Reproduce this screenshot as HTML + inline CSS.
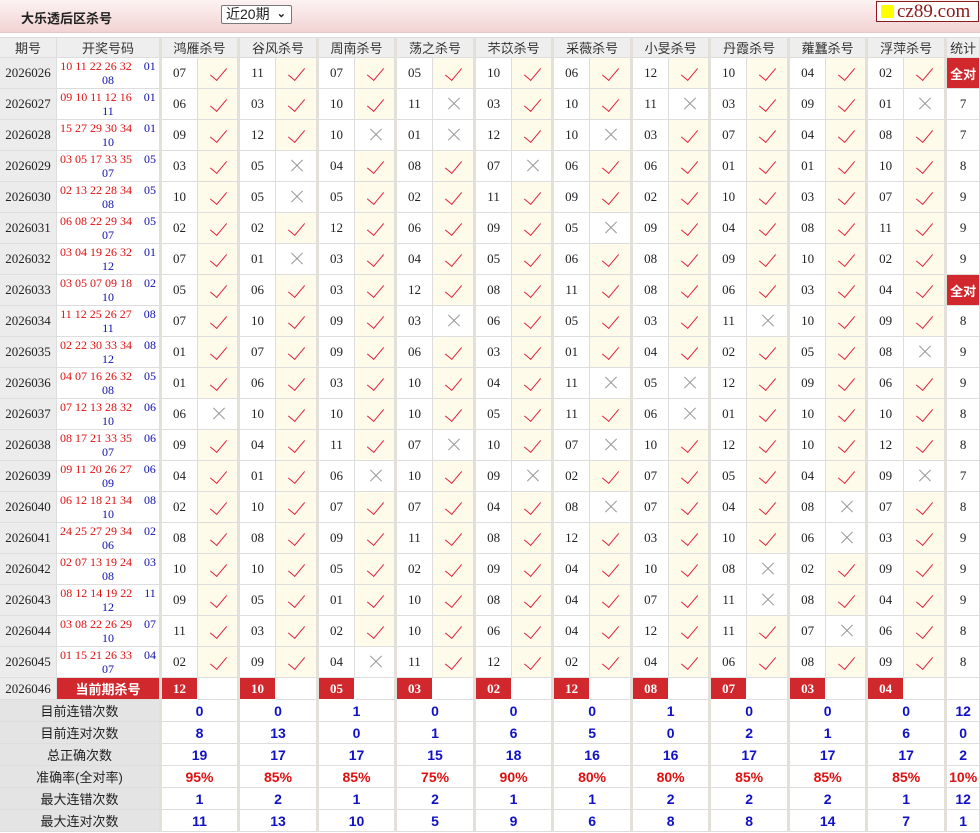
<!DOCTYPE html>
<html><head><meta charset="utf-8"><style>
*{margin:0;padding:0;box-sizing:border-box}
body{width:980px;height:833px;background:#fff;position:relative;overflow:hidden;font-family:"Liberation Serif","Noto Serif CJK SC",serif;font-size:12px;color:#222}
.top{position:absolute;left:0;top:0;width:980px;height:33px;background:linear-gradient(#fdf3f3,#f2d3d3);border-bottom:1px solid #e6c8c8}
.tt{position:absolute;left:21px;top:8px;font:bold 13px "Liberation Sans","Noto Sans CJK SC",sans-serif;color:#222}
.sel{position:absolute;left:221px;top:5px;width:71px;height:19px;border:1px solid #777;border-radius:2px;background:#fff;font:14px "Liberation Sans","Noto Sans CJK SC",sans-serif;padding-left:4px;line-height:17px}
.sel b{position:absolute;right:5px;top:0;font-size:11px}
.logo{position:absolute;left:876px;top:1px;width:103px;height:21px;border:1px solid #8b1a1a;background:#fff;font:19px "Liberation Serif",serif;color:#8b1a1a;line-height:19px;padding-left:20px}
.logo i{position:absolute;left:4px;top:3px;width:13px;height:13px;background:#ff0}
table{position:absolute;left:0;top:37px;width:980px;border-collapse:separate;border-spacing:0;table-layout:fixed}
td,th{border-right:1px solid #ddd;border-bottom:1px solid #ddd;text-align:center;overflow:hidden;font-weight:normal;position:relative}
th{background:#eee;font:13px "Liberation Sans","Noto Sans CJK SC",sans-serif;color:#333;border-top:1px solid #ddd}
th.gp,td.g,td.st{border-right:3px solid #e3e0d9}
tr.h{height:21px}tr.r{height:31px}tr.c{height:22px}tr.t{height:22px}
td.q{background:#ececec;font-size:13px}
td.d{line-height:14px;font-size:12px;border-right:3px solid #e3e0d9}
.rd{color:#e01010}.bl{color:#1010b0}
td.n{font-size:13px}
td.y{background:#fffbea}
td.y::after{content:"";position:absolute;left:16px;top:6px;width:8px;height:15px;border:solid #e2203c;border-width:0 1.7px 1.7px 0;transform:rotate(40deg)}
td.x::before,td.x::after{content:"";position:absolute;left:13px;top:14px;width:16px;height:1px;background:#999;transform:rotate(45deg)}
td.x::after{transform:rotate(-45deg)}
td.s{font-size:13px}
td.a{background:#d0282c;color:#fff;font:bold 13px "Liberation Sans","Noto Sans CJK SC",sans-serif}
td.k{background:#d0282c;color:#fff;font-weight:bold;font-size:13px;border-color:#fff}
td.kk{background:#d0282c;color:#fff;font:bold 13px "Liberation Sans","Noto Sans CJK SC",sans-serif;border-right:3px solid #e3e0d9}
td.l{background:#e4e4e4;font:13px "Liberation Sans","Noto Sans CJK SC",sans-serif;color:#222;border-right:3px solid #e3e0d9}
td.v{font:bold 14px "Liberation Sans",sans-serif;color:#1010c8}
td.p{font:bold 14px "Liberation Sans",sans-serif;color:#e01010}
</style></head><body>
<div class="top"><div class="tt">大乐透后区杀号</div><div class="sel">近20期<b>&#8964;</b></div><div class="logo"><i></i>cz89.com</div></div>
<table>
<colgroup><col style="width:57px"><col style="width:105px"><col style="width:36px"><col style="width:42px"><col style="width:36px"><col style="width:43px"><col style="width:36px"><col style="width:42px"><col style="width:36px"><col style="width:43px"><col style="width:36px"><col style="width:42px"><col style="width:36px"><col style="width:43px"><col style="width:36px"><col style="width:42px"><col style="width:36px"><col style="width:43px"><col style="width:36px"><col style="width:42px"><col style="width:36px"><col style="width:43px"><col style="width:33px"></colgroup>
<tr class="h"><th>期号</th><th class="gp">开奖号码</th><th colspan="2" class="gp">鸿雁杀号</th><th colspan="2" class="gp">谷风杀号</th><th colspan="2" class="gp">周南杀号</th><th colspan="2" class="gp">荡之杀号</th><th colspan="2" class="gp">芣苡杀号</th><th colspan="2" class="gp">采薇杀号</th><th colspan="2" class="gp">小旻杀号</th><th colspan="2" class="gp">丹霞杀号</th><th colspan="2" class="gp">蕹蠶杀号</th><th colspan="2" class="gp">浮萍杀号</th><th>统计</th></tr>
<tr class="r"><td class="q">2026026</td><td class="d"><span class="rd">10 11 22 26 32</span>&nbsp;&nbsp;&nbsp; <span class="bl">01<br>08</span></td><td class="n">07</td><td class="g y"></td><td class="n">11</td><td class="g y"></td><td class="n">07</td><td class="g y"></td><td class="n">05</td><td class="g y"></td><td class="n">10</td><td class="g y"></td><td class="n">06</td><td class="g y"></td><td class="n">12</td><td class="g y"></td><td class="n">10</td><td class="g y"></td><td class="n">04</td><td class="g y"></td><td class="n">02</td><td class="g y"></td><td class="a">全对</td></tr>
<tr class="r"><td class="q">2026027</td><td class="d"><span class="rd">09 10 11 12 16</span>&nbsp;&nbsp;&nbsp; <span class="bl">01<br>11</span></td><td class="n">06</td><td class="g y"></td><td class="n">03</td><td class="g y"></td><td class="n">10</td><td class="g y"></td><td class="n">11</td><td class="g x"></td><td class="n">03</td><td class="g y"></td><td class="n">10</td><td class="g y"></td><td class="n">11</td><td class="g x"></td><td class="n">03</td><td class="g y"></td><td class="n">09</td><td class="g y"></td><td class="n">01</td><td class="g x"></td><td class="s">7</td></tr>
<tr class="r"><td class="q">2026028</td><td class="d"><span class="rd">15 27 29 30 34</span>&nbsp;&nbsp;&nbsp; <span class="bl">01<br>10</span></td><td class="n">09</td><td class="g y"></td><td class="n">12</td><td class="g y"></td><td class="n">10</td><td class="g x"></td><td class="n">01</td><td class="g x"></td><td class="n">12</td><td class="g y"></td><td class="n">10</td><td class="g x"></td><td class="n">03</td><td class="g y"></td><td class="n">07</td><td class="g y"></td><td class="n">04</td><td class="g y"></td><td class="n">08</td><td class="g y"></td><td class="s">7</td></tr>
<tr class="r"><td class="q">2026029</td><td class="d"><span class="rd">03 05 17 33 35</span>&nbsp;&nbsp;&nbsp; <span class="bl">05<br>07</span></td><td class="n">03</td><td class="g y"></td><td class="n">05</td><td class="g x"></td><td class="n">04</td><td class="g y"></td><td class="n">08</td><td class="g y"></td><td class="n">07</td><td class="g x"></td><td class="n">06</td><td class="g y"></td><td class="n">06</td><td class="g y"></td><td class="n">01</td><td class="g y"></td><td class="n">01</td><td class="g y"></td><td class="n">10</td><td class="g y"></td><td class="s">8</td></tr>
<tr class="r"><td class="q">2026030</td><td class="d"><span class="rd">02 13 22 28 34</span>&nbsp;&nbsp;&nbsp; <span class="bl">05<br>08</span></td><td class="n">10</td><td class="g y"></td><td class="n">05</td><td class="g x"></td><td class="n">05</td><td class="g y"></td><td class="n">02</td><td class="g y"></td><td class="n">11</td><td class="g y"></td><td class="n">09</td><td class="g y"></td><td class="n">02</td><td class="g y"></td><td class="n">10</td><td class="g y"></td><td class="n">03</td><td class="g y"></td><td class="n">07</td><td class="g y"></td><td class="s">9</td></tr>
<tr class="r"><td class="q">2026031</td><td class="d"><span class="rd">06 08 22 29 34</span>&nbsp;&nbsp;&nbsp; <span class="bl">05<br>07</span></td><td class="n">02</td><td class="g y"></td><td class="n">02</td><td class="g y"></td><td class="n">12</td><td class="g y"></td><td class="n">06</td><td class="g y"></td><td class="n">09</td><td class="g y"></td><td class="n">05</td><td class="g x"></td><td class="n">09</td><td class="g y"></td><td class="n">04</td><td class="g y"></td><td class="n">08</td><td class="g y"></td><td class="n">11</td><td class="g y"></td><td class="s">9</td></tr>
<tr class="r"><td class="q">2026032</td><td class="d"><span class="rd">03 04 19 26 32</span>&nbsp;&nbsp;&nbsp; <span class="bl">01<br>12</span></td><td class="n">07</td><td class="g y"></td><td class="n">01</td><td class="g x"></td><td class="n">03</td><td class="g y"></td><td class="n">04</td><td class="g y"></td><td class="n">05</td><td class="g y"></td><td class="n">06</td><td class="g y"></td><td class="n">08</td><td class="g y"></td><td class="n">09</td><td class="g y"></td><td class="n">10</td><td class="g y"></td><td class="n">02</td><td class="g y"></td><td class="s">9</td></tr>
<tr class="r"><td class="q">2026033</td><td class="d"><span class="rd">03 05 07 09 18</span>&nbsp;&nbsp;&nbsp; <span class="bl">02<br>10</span></td><td class="n">05</td><td class="g y"></td><td class="n">06</td><td class="g y"></td><td class="n">03</td><td class="g y"></td><td class="n">12</td><td class="g y"></td><td class="n">08</td><td class="g y"></td><td class="n">11</td><td class="g y"></td><td class="n">08</td><td class="g y"></td><td class="n">06</td><td class="g y"></td><td class="n">03</td><td class="g y"></td><td class="n">04</td><td class="g y"></td><td class="a">全对</td></tr>
<tr class="r"><td class="q">2026034</td><td class="d"><span class="rd">11 12 25 26 27</span>&nbsp;&nbsp;&nbsp; <span class="bl">08<br>11</span></td><td class="n">07</td><td class="g y"></td><td class="n">10</td><td class="g y"></td><td class="n">09</td><td class="g y"></td><td class="n">03</td><td class="g x"></td><td class="n">06</td><td class="g y"></td><td class="n">05</td><td class="g y"></td><td class="n">03</td><td class="g y"></td><td class="n">11</td><td class="g x"></td><td class="n">10</td><td class="g y"></td><td class="n">09</td><td class="g y"></td><td class="s">8</td></tr>
<tr class="r"><td class="q">2026035</td><td class="d"><span class="rd">02 22 30 33 34</span>&nbsp;&nbsp;&nbsp; <span class="bl">08<br>12</span></td><td class="n">01</td><td class="g y"></td><td class="n">07</td><td class="g y"></td><td class="n">09</td><td class="g y"></td><td class="n">06</td><td class="g y"></td><td class="n">03</td><td class="g y"></td><td class="n">01</td><td class="g y"></td><td class="n">04</td><td class="g y"></td><td class="n">02</td><td class="g y"></td><td class="n">05</td><td class="g y"></td><td class="n">08</td><td class="g x"></td><td class="s">9</td></tr>
<tr class="r"><td class="q">2026036</td><td class="d"><span class="rd">04 07 16 26 32</span>&nbsp;&nbsp;&nbsp; <span class="bl">05<br>08</span></td><td class="n">01</td><td class="g y"></td><td class="n">06</td><td class="g y"></td><td class="n">03</td><td class="g y"></td><td class="n">10</td><td class="g y"></td><td class="n">04</td><td class="g y"></td><td class="n">11</td><td class="g x"></td><td class="n">05</td><td class="g x"></td><td class="n">12</td><td class="g y"></td><td class="n">09</td><td class="g y"></td><td class="n">06</td><td class="g y"></td><td class="s">9</td></tr>
<tr class="r"><td class="q">2026037</td><td class="d"><span class="rd">07 12 13 28 32</span>&nbsp;&nbsp;&nbsp; <span class="bl">06<br>10</span></td><td class="n">06</td><td class="g x"></td><td class="n">10</td><td class="g y"></td><td class="n">10</td><td class="g y"></td><td class="n">10</td><td class="g y"></td><td class="n">05</td><td class="g y"></td><td class="n">11</td><td class="g y"></td><td class="n">06</td><td class="g x"></td><td class="n">01</td><td class="g y"></td><td class="n">10</td><td class="g y"></td><td class="n">10</td><td class="g y"></td><td class="s">8</td></tr>
<tr class="r"><td class="q">2026038</td><td class="d"><span class="rd">08 17 21 33 35</span>&nbsp;&nbsp;&nbsp; <span class="bl">06<br>07</span></td><td class="n">09</td><td class="g y"></td><td class="n">04</td><td class="g y"></td><td class="n">11</td><td class="g y"></td><td class="n">07</td><td class="g x"></td><td class="n">10</td><td class="g y"></td><td class="n">07</td><td class="g x"></td><td class="n">10</td><td class="g y"></td><td class="n">12</td><td class="g y"></td><td class="n">10</td><td class="g y"></td><td class="n">12</td><td class="g y"></td><td class="s">8</td></tr>
<tr class="r"><td class="q">2026039</td><td class="d"><span class="rd">09 11 20 26 27</span>&nbsp;&nbsp;&nbsp; <span class="bl">06<br>09</span></td><td class="n">04</td><td class="g y"></td><td class="n">01</td><td class="g y"></td><td class="n">06</td><td class="g x"></td><td class="n">10</td><td class="g y"></td><td class="n">09</td><td class="g x"></td><td class="n">02</td><td class="g y"></td><td class="n">07</td><td class="g y"></td><td class="n">05</td><td class="g y"></td><td class="n">04</td><td class="g y"></td><td class="n">09</td><td class="g x"></td><td class="s">7</td></tr>
<tr class="r"><td class="q">2026040</td><td class="d"><span class="rd">06 12 18 21 34</span>&nbsp;&nbsp;&nbsp; <span class="bl">08<br>10</span></td><td class="n">02</td><td class="g y"></td><td class="n">10</td><td class="g y"></td><td class="n">07</td><td class="g y"></td><td class="n">07</td><td class="g y"></td><td class="n">04</td><td class="g y"></td><td class="n">08</td><td class="g x"></td><td class="n">07</td><td class="g y"></td><td class="n">04</td><td class="g y"></td><td class="n">08</td><td class="g x"></td><td class="n">07</td><td class="g y"></td><td class="s">8</td></tr>
<tr class="r"><td class="q">2026041</td><td class="d"><span class="rd">24 25 27 29 34</span>&nbsp;&nbsp;&nbsp; <span class="bl">02<br>06</span></td><td class="n">08</td><td class="g y"></td><td class="n">08</td><td class="g y"></td><td class="n">09</td><td class="g y"></td><td class="n">11</td><td class="g y"></td><td class="n">08</td><td class="g y"></td><td class="n">12</td><td class="g y"></td><td class="n">03</td><td class="g y"></td><td class="n">10</td><td class="g y"></td><td class="n">06</td><td class="g x"></td><td class="n">03</td><td class="g y"></td><td class="s">9</td></tr>
<tr class="r"><td class="q">2026042</td><td class="d"><span class="rd">02 07 13 19 24</span>&nbsp;&nbsp;&nbsp; <span class="bl">03<br>08</span></td><td class="n">10</td><td class="g y"></td><td class="n">10</td><td class="g y"></td><td class="n">05</td><td class="g y"></td><td class="n">02</td><td class="g y"></td><td class="n">09</td><td class="g y"></td><td class="n">04</td><td class="g y"></td><td class="n">10</td><td class="g y"></td><td class="n">08</td><td class="g x"></td><td class="n">02</td><td class="g y"></td><td class="n">09</td><td class="g y"></td><td class="s">9</td></tr>
<tr class="r"><td class="q">2026043</td><td class="d"><span class="rd">08 12 14 19 22</span>&nbsp;&nbsp;&nbsp; <span class="bl">11<br>12</span></td><td class="n">09</td><td class="g y"></td><td class="n">05</td><td class="g y"></td><td class="n">01</td><td class="g y"></td><td class="n">10</td><td class="g y"></td><td class="n">08</td><td class="g y"></td><td class="n">04</td><td class="g y"></td><td class="n">07</td><td class="g y"></td><td class="n">11</td><td class="g x"></td><td class="n">08</td><td class="g y"></td><td class="n">04</td><td class="g y"></td><td class="s">9</td></tr>
<tr class="r"><td class="q">2026044</td><td class="d"><span class="rd">03 08 22 26 29</span>&nbsp;&nbsp;&nbsp; <span class="bl">07<br>10</span></td><td class="n">11</td><td class="g y"></td><td class="n">03</td><td class="g y"></td><td class="n">02</td><td class="g y"></td><td class="n">10</td><td class="g y"></td><td class="n">06</td><td class="g y"></td><td class="n">04</td><td class="g y"></td><td class="n">12</td><td class="g y"></td><td class="n">11</td><td class="g y"></td><td class="n">07</td><td class="g x"></td><td class="n">06</td><td class="g y"></td><td class="s">8</td></tr>
<tr class="r"><td class="q">2026045</td><td class="d"><span class="rd">01 15 21 26 33</span>&nbsp;&nbsp;&nbsp; <span class="bl">04<br>07</span></td><td class="n">02</td><td class="g y"></td><td class="n">09</td><td class="g y"></td><td class="n">04</td><td class="g x"></td><td class="n">11</td><td class="g y"></td><td class="n">12</td><td class="g y"></td><td class="n">02</td><td class="g y"></td><td class="n">04</td><td class="g y"></td><td class="n">06</td><td class="g y"></td><td class="n">08</td><td class="g y"></td><td class="n">09</td><td class="g y"></td><td class="s">8</td></tr>
<tr class="c"><td class="q">2026046</td><td class="kk">当前期杀号</td><td class="k">12</td><td class="g"></td><td class="k">10</td><td class="g"></td><td class="k">05</td><td class="g"></td><td class="k">03</td><td class="g"></td><td class="k">02</td><td class="g"></td><td class="k">12</td><td class="g"></td><td class="k">08</td><td class="g"></td><td class="k">07</td><td class="g"></td><td class="k">03</td><td class="g"></td><td class="k">04</td><td class="g"></td><td></td></tr>
<tr class="t"><td colspan="2" class="l">目前连错次数</td><td colspan="2" class="v st">0</td><td colspan="2" class="v st">0</td><td colspan="2" class="v st">1</td><td colspan="2" class="v st">0</td><td colspan="2" class="v st">0</td><td colspan="2" class="v st">0</td><td colspan="2" class="v st">1</td><td colspan="2" class="v st">0</td><td colspan="2" class="v st">0</td><td colspan="2" class="v st">0</td><td class="v">12</td></tr>
<tr class="t"><td colspan="2" class="l">目前连对次数</td><td colspan="2" class="v st">8</td><td colspan="2" class="v st">13</td><td colspan="2" class="v st">0</td><td colspan="2" class="v st">1</td><td colspan="2" class="v st">6</td><td colspan="2" class="v st">5</td><td colspan="2" class="v st">0</td><td colspan="2" class="v st">2</td><td colspan="2" class="v st">1</td><td colspan="2" class="v st">6</td><td class="v">0</td></tr>
<tr class="t"><td colspan="2" class="l">总正确次数</td><td colspan="2" class="v st">19</td><td colspan="2" class="v st">17</td><td colspan="2" class="v st">17</td><td colspan="2" class="v st">15</td><td colspan="2" class="v st">18</td><td colspan="2" class="v st">16</td><td colspan="2" class="v st">16</td><td colspan="2" class="v st">17</td><td colspan="2" class="v st">17</td><td colspan="2" class="v st">17</td><td class="v">2</td></tr>
<tr class="t"><td colspan="2" class="l">准确率(全对率)</td><td colspan="2" class="p st">95%</td><td colspan="2" class="p st">85%</td><td colspan="2" class="p st">85%</td><td colspan="2" class="p st">75%</td><td colspan="2" class="p st">90%</td><td colspan="2" class="p st">80%</td><td colspan="2" class="p st">80%</td><td colspan="2" class="p st">85%</td><td colspan="2" class="p st">85%</td><td colspan="2" class="p st">85%</td><td class="p">10%</td></tr>
<tr class="t"><td colspan="2" class="l">最大连错次数</td><td colspan="2" class="v st">1</td><td colspan="2" class="v st">2</td><td colspan="2" class="v st">1</td><td colspan="2" class="v st">2</td><td colspan="2" class="v st">1</td><td colspan="2" class="v st">1</td><td colspan="2" class="v st">2</td><td colspan="2" class="v st">2</td><td colspan="2" class="v st">2</td><td colspan="2" class="v st">1</td><td class="v">12</td></tr>
<tr class="t"><td colspan="2" class="l">最大连对次数</td><td colspan="2" class="v st">11</td><td colspan="2" class="v st">13</td><td colspan="2" class="v st">10</td><td colspan="2" class="v st">5</td><td colspan="2" class="v st">9</td><td colspan="2" class="v st">6</td><td colspan="2" class="v st">8</td><td colspan="2" class="v st">8</td><td colspan="2" class="v st">14</td><td colspan="2" class="v st">7</td><td class="v">1</td></tr>
</table>
</body></html>
